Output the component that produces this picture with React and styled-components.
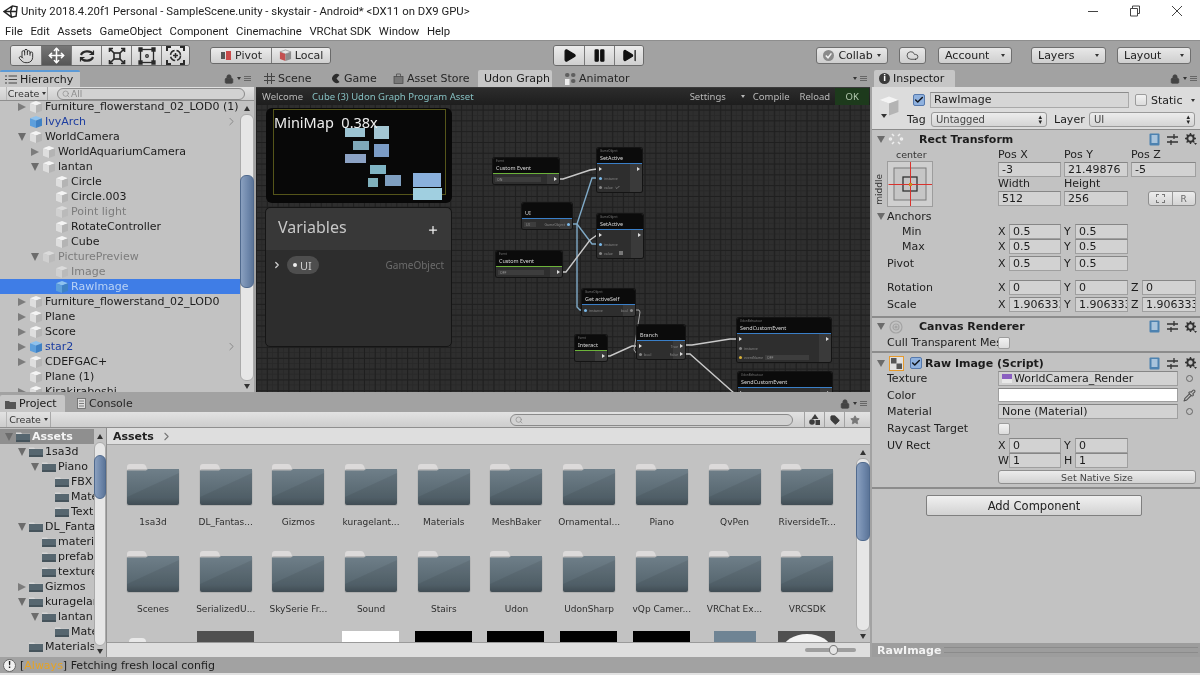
import React from "react";
import styled, { createGlobalStyle } from "styled-components";
import { Hand, Move, Lock, Search, Star, Tag, Cloud, Pipette, ChevronRight, Plus, Play, Pause, SkipForward, Check } from "lucide-react";

const GlobalStyle = createGlobalStyle`
  html, body { margin: 0; padding: 0; background: #a2a2a2; }
  * { box-sizing: border-box; }
`;

const Page = styled.div`
  width: 1200px;
  height: 675px;
  display: flex;
  flex-direction: column;
  overflow: hidden;
  font-family: "DejaVu Sans", sans-serif;
  font-size: 11px;
  color: #1c1c1c;
  background: #a2a2a2;
  filter: blur(0.4px);
`;

/* window chrome */
const TitleBar = styled.div`
  height: 22px;
  background: #fff;
  display: flex;
  align-items: center;
  padding-left: 3px;
  font-family: Roboto, sans-serif;
  font-size: 11.35px;
  color: #222;
`;
const TitleText = styled.span`
  margin-left: 3px;
  flex: 1;
`;
const WinButtons = styled.div`
  display: flex;
  align-items: center;
  gap: 30px;
  padding-right: 17px;
  color: #444;
`;
const MenuBar = styled.div`
  height: 18px;
  background: #fff;
  display: flex;
  align-items: center;
  gap: 7.6px;
  padding-left: 5px;
  font-family: Roboto, sans-serif;
  font-size: 11.35px;
  color: #222;
`;

/* toolbar */
const Toolbar = styled.div`
  height: 30px;
  display: flex;
  align-items: center;
  padding-left: 10px;
  border-top: 1px solid #8e8e8e;
  background: #a2a2a2;
`;
const BtnGroup = styled.div`
  display: flex;
  margin-left: ${(p) => p.$ml || 0}px;
  border: 1px solid #6a6a6a;
  border-radius: 3px;
  overflow: hidden;
  height: ${(p) => p.$h || 17}px;
`;
const ToolBtn = styled.div`
  width: ${(p) => p.$w}px;
  display: flex;
  align-items: center;
  justify-content: center;
  gap: 3px;
  color: ${(p) => (p.$on ? "#fff" : "#2a2a2a")};
  background: ${(p) => (p.$on ? "linear-gradient(#767676,#565656)" : "linear-gradient(#ececec,#cfcfcf)")};
  border-left: 1px solid #7a7a7a;
  font-size: 11px;
  &:first-child { border-left: 0; }
`;
const DropBtn = styled.div`
  width: ${(p) => p.$w}px;
  height: 17px;
  margin-left: ${(p) => p.$ml}px;
  padding: 0 6px;
  display: flex;
  align-items: center;
  justify-content: space-between;
  border: 1px solid #6f6f6f;
  border-radius: 3px;
  background: linear-gradient(#e8e8e8, #cecece);
  font-size: 11px;
  color: #222;
`;
const Caret = styled.span`
  width: 0;
  height: 0;
  border-left: 2.5px solid transparent;
  border-right: 2.5px solid transparent;
  border-top: 3px solid #333;
`;

/* layout */
const Workspace = styled.div`
  height: 587px;
  display: flex;
`;
const LeftArea = styled.div`
  width: 870px;
  display: flex;
  flex-direction: column;
  gap: 3px;
`;
const TopRow = styled.div`
  height: 322px;
  display: flex;
  gap: 2px;
`;
const Panel = styled.div`
  width: ${(p) => p.$w}px;
  height: ${(p) => (p.$h ? `${p.$h}px` : "auto")};
  display: flex;
  flex-direction: column;
  overflow: hidden;
`;
const TabBar = styled.div`
  height: 17px;
  flex: none;
  display: flex;
  align-items: stretch;
  padding-left: ${(p) => p.$pl || 0}px;
  background: #a2a2a2;
`;
const TabItem = styled.div`
  width: ${(p) => p.$w}px;
  display: flex;
  align-items: center;
  gap: 3px;
  padding-left: ${(p) => p.$pl || 5}px;
  font-size: 11px;
  color: ${(p) => (p.$on ? "#1a1a1a" : "#262626")};
  background: ${(p) => (p.$on ? "#c6c6c6" : "transparent")};
  border-top: ${(p) => (p.$focus ? "2px solid #5c9ad6" : "0")};
  border-radius: 2px 2px 0 0;
`;
const TabTools = styled.div`
  margin-left: auto;
  display: flex;
  align-items: center;
  gap: 3px;
  padding-right: 3px;
  color: #444;
`;
const MenuGlyph = styled.span`
  width: 7px;
  height: 5px;
  border-top: 1px solid #666;
  border-bottom: 1px solid #666;
  position: relative;
  &::after {
    content: "";
    position: absolute;
    left: 0;
    right: 0;
    top: 1px;
    height: 1px;
    background: #666;
  }
`;
const InfoCircle = styled.span`
  width: 11px;
  height: 11px;
  display: flex;
  align-items: center;
  justify-content: center;
  border-radius: 50%;
  background: #3a3a3a;
  color: #fff;
  font-size: 8px;
  font-weight: 700;
`;

/* hierarchy */
const PanelBar = styled.div`
  height: ${(p) => p.$h || 14}px;
  flex: none;
  display: flex;
  align-items: center;
  background: linear-gradient(#e2e2e2, #cdcdcd);
  border-bottom: 1px solid #8f8f8f;
`;
const CreateBtn = styled.div`
  width: ${(p) => p.$w}px;
  height: 100%;
  margin-left: ${(p) => p.$ml}px;
  display: flex;
  align-items: center;
  justify-content: center;
  gap: 3px;
  border-right: 1px solid #a8a8a8;
  border-left: 1px solid #b8b8b8;
  font-size: 9.5px;
  color: #333;
`;
const SearchField = styled.div`
  width: ${(p) => p.$w}px;
  height: 12px;
  margin-left: ${(p) => p.$ml}px;
  display: flex;
  align-items: center;
  padding-left: 4px;
  gap: 1px;
  border: 1px solid #8a8a8a;
  border-radius: 7px;
  background: #d2d2d2;
  font-size: 9px;
  color: #8d8d8d;
`;
const ListArea = styled.div`
  flex: 1;
  min-height: 0;
  display: flex;
  background: #c2c2c2;
`;
const TreeList = styled.div`
  flex: 1;
  min-width: 0;
  overflow: hidden;
  margin-top: ${(p) => p.$mt || 0}px;
`;
const Row = styled.div`
  height: 15px;
  display: flex;
  align-items: center;
  padding-left: ${(p) => 29 + p.$depth * 13}px;
  white-space: nowrap;
  font-size: 11px;
  font-weight: ${(p) => (p.$head ? 700 : 400)};
  background: ${(p) => (p.$sel ? "#3f7de6" : p.$head ? "#8f8f8f" : "transparent")};
  color: ${(p) => (p.$head ? "#f4f4f4" : p.$sel ? "#b8d2f5" : p.$dim ? "#7c7c7c" : p.$prefab ? "#1c3da0" : "#1c1c1c")};
`;
const ArrowSlot = styled.span`
  width: 0;
  position: relative;
  &::before {
    content: "";
    display: ${(p) => (p.$dir ? "block" : "none")};
    position: absolute;
    left: -11px;
    top: -4px;
    width: 0;
    height: 0;
    ${(p) =>
      p.$dir === "down"
        ? "border-left:4px solid transparent;border-right:4px solid transparent;border-top:8px solid #6c6c6c;"
        : "border-top:4px solid transparent;border-bottom:4px solid transparent;border-left:8px solid #7c7c7c;"}
  }
`;
const RowName = styled.span`
  margin-left: 2px;
`;
const RowChevron = styled.span`
  margin-left: auto;
  padding-right: 2px;
  display: flex;
  color: #777;
`;

/* scrollbars */
const Scrollbar = styled.div`
  width: ${(p) => p.$w || 13}px;
  flex: none;
  display: flex;
  flex-direction: column;
  align-items: center;
  padding: ${(p) => p.$pad || 0}px 0 3px;
`;
const ScrollTrack = styled.div`
  flex: 1;
  width: 100%;
  min-height: 0;
  margin: 3px 0;
  padding-top: ${(p) => p.$top}px;
  border-radius: 6px;
  background: #e6e6e6;
  border: 1px solid #aaa;
`;
const ScrollThumb = styled.div`
  height: ${(p) => p.$h}px;
  margin: 0 -1px;
  border-radius: 6px;
  border: 1px solid #506a8e;
  background: linear-gradient(90deg, #8aa0bf, #6d86aa 60%, #5c7598);
`;
const Tri = styled.span`
  flex: none;
  width: 0;
  height: 0;
  border-left: 3px solid transparent;
  border-right: 3px solid transparent;
  ${(p) => (p.$up ? "border-bottom: 5px solid #333;" : "border-top: 5px solid #333;")}
`;

/* udon graph */
const GraphView = styled.div`
  flex: 1;
  min-height: 0;
  display: flex;
  flex-direction: column;
  border-top: 1px solid #3a3a3a;
  background-color: #2e2e2e;
  background-image:
    linear-gradient(#1f1f1f 1px, transparent 1px),
    linear-gradient(90deg, #1f1f1f 1px, transparent 1px),
    linear-gradient(#282828 1px, transparent 1px),
    linear-gradient(90deg, #282828 1px, transparent 1px);
  background-size: 10.8px 10.8px, 10.8px 10.8px, 5.4px 5.4px, 5.4px 5.4px;
`;
const GraphBar = styled.div`
  height: 17px;
  flex: none;
  display: flex;
  align-items: stretch;
  white-space: nowrap;
  background: linear-gradient(#2c2c2c, #1e1e1e);
  font-family: "Noto Sans", sans-serif;
  font-size: 9.5px;
  color: #b8b8b8;
  padding-left: 6px;
`;
const GraphCrumb = styled.span`
  flex: none;
  display: flex;
  align-items: center;
  margin-left: ${(p) => p.$ml || 0}px;
  width: ${(p) => (p.$w ? `${p.$w}px` : "auto")};
  color: ${(p) => p.$c || "#b8b8b8"};
  background: ${(p) => p.$bg || "transparent"};
  justify-content: ${(p) => (p.$center ? "center" : "flex-start")};
`;
const GraphCaret = styled(Caret)`
  border-top-color: #b8b8b8;
`;
const GraphCanvas = styled.div`
  position: relative;
  flex: 1;
  min-height: 0;
  overflow: hidden;
`;
const WireLayer = styled.svg`
  position: absolute;
  left: 0;
  top: 0;
  z-index: 2;
`;
const MiniMap = styled.div`
  position: absolute;
  left: 10px;
  top: 3px;
  width: 186px;
  height: 95px;
  border-radius: 6px;
  background: #080808;
  z-index: 3;
`;
const MiniFrame = styled.div`
  position: absolute;
  left: 7px;
  top: 1px;
  width: 173px;
  height: 86px;
  border: 1px solid #55551a;
`;
const MiniLabel = styled.div`
  position: absolute;
  left: 8px;
  top: 4px;
  font-family: "Noto Sans", sans-serif;
  font-size: 14.5px;
  color: #eee;
  white-space: pre;
  z-index: 1;
`;
const MiniNode = styled.div`
  position: absolute;
  left: ${(p) => p.$x - 266}px;
  top: ${(p) => p.$y - 108}px;
  width: ${(p) => p.$w}px;
  height: ${(p) => p.$h}px;
  background: ${(p) => p.$c};
`;
const Variables = styled.div`
  position: absolute;
  left: 9px;
  top: 102px;
  width: 187px;
  height: 140px;
  border-radius: 5px;
  border: 1px solid #151515;
  background: #2d2d2d;
  z-index: 3;
  font-family: "Noto Sans", sans-serif;
`;
const VarHead = styled.div`
  height: 42px;
  display: flex;
  align-items: center;
  justify-content: space-between;
  padding: 0 12px 4px 12px;
  background: #383838;
  border-radius: 5px 5px 0 0;
  font-size: 16px;
  color: #c8c8c8;
  svg { color: #f0f0f0; margin-top: 6px; }
`;
const VarRow = styled.div`
  display: flex;
  align-items: center;
  padding: 6px 7px 0 6px;
  color: #cfcfcf;
`;
const VarPill = styled.div`
  width: 32px;
  height: 18px;
  margin-left: 5px;
  display: flex;
  align-items: center;
  gap: 3px;
  padding-left: 6px;
  border-radius: 9px;
  background: #4e4e4e;
  font-size: 11px;
`;
const VarDot = styled.span`
  width: 4px;
  height: 4px;
  border-radius: 50%;
  background: #eee;
`;
const VarType = styled.span`
  margin-left: auto;
  font-size: 10px;
  color: #6c6c6c;
`;

const NodeBox = styled.div`
  position: absolute;
  left: ${(p) => p.$x - 256}px;
  top: ${(p) => p.$y - 105}px;
  width: ${(p) => p.$w}px;
  height: ${(p) => p.$h}px;
  border-radius: 2px;
  overflow: hidden;
  background: linear-gradient(90deg, #2e2e2e calc(100% - 12px), #3a3a3a 0);
  box-shadow: 0 0 0 1px #141414;
  font-family: "Noto Sans", sans-serif;
  color: #c8c8c8;
  z-index: 3;
`;
const NodeHead = styled.div`
  height: 16px;
  background: #0b0b0b;
  padding: 1px 2px 0 3px;
  border-bottom: 1.5px solid ${(p) => p.$bar};
  font-size: 5.4px;
  line-height: 8px;
  color: #ddd;
  white-space: nowrap;
`;
const NodeSub = styled.div`
  font-size: 3px;
  line-height: 5px;
  height: 5px;
  color: #777;
`;
const NodeBody = styled.div`
  display: flex;
  flex-direction: column;
  padding: 2px 0 0 2px;
  gap: ${(p) => p.$gap || 2}px;
  font-size: 3.5px;
  color: #888;
`;
const NodeLine = styled.div`
  height: 6px;
  display: flex;
  align-items: center;
  gap: 2px;
  padding-right: 2px;
  justify-content: ${(p) => p.$justify || "space-between"};
`;
const NodeField = styled.span`
  width: ${(p) => p.$w}px;
  height: 5px;
  padding-left: 2px;
  line-height: 5px;
  background: #3d3d3d;
  color: #999;
`;
const PortDot = styled.span`
  width: 3px;
  height: 3px;
  border-radius: 50%;
  background: ${(p) => p.$c || "#888"};
`;
const FlowTri = styled.span`
  width: 0;
  height: 0;
  border-top: 2px solid transparent;
  border-bottom: 2px solid transparent;
  border-left: 3px solid #ddd;
`;
const NodeSide = styled.span`
  display: flex;
  align-items: center;
  gap: 2px;
`;
const NodeCheck = styled.span`
  width: 4px;
  height: 4px;
  margin-left: 4px;
  background: #777;
`;

/* inspector */
const InspectorPane = styled.div`
  width: 328px;
  margin-left: 2px;
  display: flex;
  flex-direction: column;
  background: #a2a2a2;
`;
const InspBody = styled.div`
  flex: 1;
  min-height: 0;
  background: #c2c2c2;
`;
const InspHead = styled.div`
  height: 43px;
  display: flex;
  gap: 13px;
  padding: 5px 0 0 6px;
  background: #dcdcdc;
  border-bottom: 1px solid #8b8b8b;
`;
const HeadLines = styled.div`
  display: flex;
  flex-direction: column;
  gap: 4px;
`;
const HeadLine = styled.div`
  display: flex;
  align-items: center;
`;
const HeadCube = styled.div`
  position: relative;
  padding-top: 3px;
`;
const CubeCaret = styled.span`
  position: absolute;
  left: 3px;
  top: 22px;
  width: 0;
  height: 0;
  border-left: 3.5px solid transparent;
  border-right: 3.5px solid transparent;
  border-top: 4px solid #333;
`;
const CheckBox = styled.span`
  width: 12px;
  height: 12px;
  flex: none;
  margin-left: ${(p) => p.$ml || 0}px;
  display: flex;
  align-items: center;
  justify-content: center;
  border: 1px solid ${(p) => (p.$on ? "#5679ad" : "#9c9c9c")};
  border-radius: 2px;
  background: ${(p) => (p.$on ? "#8fb1de" : "linear-gradient(#f2f2f2,#dcdcdc)")};
  color: #10151d;
`;
const NameField = styled.div`
  width: ${(p) => p.$w}px;
  height: 16px;
  margin-left: 5px;
  padding-left: 3px;
  line-height: 14px;
  border: 1px solid #a9a9a9;
  border-top-color: #8c8c8c;
  background: #d6d6d6;
`;
const StaticLabel = styled.span`
  margin-left: 4px;
  display: flex;
  align-items: center;
  gap: 9px;
`;
const HeadLabel = styled.span`
  width: ${(p) => p.$w}px;
  margin-left: ${(p) => p.$ml || 0}px;
`;
const Popup = styled.div`
  width: ${(p) => p.$w}px;
  height: 15px;
  padding: 0 4px;
  display: flex;
  align-items: center;
  justify-content: space-between;
  border: 1px solid #9a9a9a;
  border-radius: 3px;
  background: linear-gradient(#ececec, #d5d5d5);
  font-size: 10px;
  color: #444;
`;
const UpDown = styled.span`
  font-size: 7px;
  line-height: 5px;
  color: #222;
  white-space: pre;
`;

const Section = styled.div`
  height: ${(p) => p.$h}px;
  border-bottom: 2px solid #8c8c8c;
`;
const SectionHead = styled.div`
  height: ${(p) => p.$h || 18}px;
  display: flex;
  align-items: center;
  padding: ${(p) => p.$pt || 0}px 0 0 5px;
  font-weight: 700;
  font-size: 11px;
`;
const SectionName = styled.span`
  margin-left: ${(p) => p.$ml}px;
`;
const SecArrow = styled.span`
  width: 0;
  height: 0;
  border-left: 4px solid transparent;
  border-right: 4px solid transparent;
  border-top: 7px solid #6b6b6b;
`;
const SecIcon = styled.span`
  width: 18px;
  height: 16px;
  margin: 0 5px 0 2px;
  display: flex;
  align-items: center;
  justify-content: center;
`;
const SecTools = styled.span`
  margin-left: auto;
  padding-right: 3px;
  display: flex;
  align-items: center;
  gap: 7px;
`;
const RectGrid = styled.div`
  display: grid;
  grid-template-columns: 126px 198px;
  height: 59px;
`;
const AnchorCol = styled.div`
  display: flex;
  flex-direction: column;
  padding-left: 15px;
  font-size: 9.5px;
  color: #333;
`;
const AnchorTitle = styled.div`
  height: 13px;
  padding-left: 9px;
  line-height: 13px;
`;
const AnchorFrame = styled.div`
  position: relative;
  width: 46px;
  height: 46px;
  border: 1px solid #9d9d9d;
  background: #cfcfcf;
`;
const AnchorSide = styled.span`
  position: absolute;
  left: -14px;
  top: 12px;
  writing-mode: vertical-rl;
  transform: rotate(180deg);
  font-size: 9px;
  color: #333;
`;
const TripleGrid = styled.div`
  display: grid;
  grid-template-columns: 63px 64px 65px;
  column-gap: 3px;
  grid-auto-rows: 14.5px;
  align-items: center;
`;
const MiniLabelText = styled.span`
  font-size: 11px;
  line-height: 14px;
  color: #222;
`;
const ValueField = styled.div`
  height: ${(p) => p.$h || 15}px;
  width: ${(p) => (p.$w ? `${p.$w}px` : "100%")};
  min-width: 0;
  flex: ${(p) => (p.$w ? "none" : 1)};
  padding-left: 3px;
  line-height: 13px;
  overflow: hidden;
  white-space: nowrap;
  border: 1px solid #9f9f9f;
  border-top-color: #868686;
  background: ${(p) => p.$bg || "#d2d2d2"};
  font-size: 11px;
`;
const BlueprintBtns = styled.div`
  display: flex;
  width: 48px;
  height: 15px;
  margin-left: 17px;
  border: 1px solid #8e8e8e;
  border-radius: 3px;
  overflow: hidden;
  background: linear-gradient(#ececec, #d4d4d4);
  color: #666;
  font-size: 9px;
`;
const BlueprintCell = styled.span`
  flex: 1;
  display: flex;
  align-items: center;
  justify-content: center;
  border-left: ${(p) => (p.$line ? "1px solid #9a9a9a" : "0")};
`;
const DashSquare = styled.span`
  width: 9px;
  height: 9px;
  border: 1px dashed #777;
`;
const PropRow = styled.div`
  height: ${(p) => p.$h || 15}px;
  margin-top: ${(p) => p.$mt || 0}px;
  display: flex;
  align-items: center;
  padding-left: ${(p) => p.$pl || 15}px;
  font-size: 11px;
  white-space: nowrap;
`;
const PropName = styled.span`
  width: ${(p) => p.$w || 111}px;
  flex: none;
  overflow: hidden;
  padding-left: ${(p) => p.$indent || 0}px;
  color: #222;
`;
const AxisCell = styled.span`
  width: ${(p) => p.$w}px;
  margin-right: 3px;
  flex: none;
  display: flex;
  align-items: center;
`;
const AxisLetter = styled.span`
  width: 11px;
  flex: none;
`;
const NativeBtn = styled.div`
  width: 198px;
  height: 14px;
  display: flex;
  align-items: center;
  justify-content: center;
  border: 1px solid #8f8f8f;
  border-radius: 3px;
  background: linear-gradient(#ececec, #d2d2d2);
  font-size: 9.5px;
  color: #444;
`;
const AddRow = styled.div`
  padding: 6px 0 0 54px;
`;
const AddBtn = styled.div`
  width: 216px;
  height: 21px;
  display: flex;
  align-items: center;
  justify-content: center;
  border: 1px solid #7f7f7f;
  border-radius: 2px;
  background: linear-gradient(#f0f0f0, #d2d2d2);
  font-size: 11.5px;
  color: #222;
`;
const ObjectDot = styled.span`
  width: 7px;
  height: 7px;
  margin-left: 8px;
  border: 1.5px solid #666;
  border-radius: 50%;
`;
const PipetteSlot = styled.span`
  display: flex;
  margin-left: 5px;
  color: #555;
`;
const TexSwatch = styled.span`
  width: 10px;
  height: 9px;
  display: inline-block;
  margin-right: 2px;
  vertical-align: -1px;
  background: linear-gradient(#8a5fc0 50%, #e8e8e8 50%);
`;
const PreviewBar = styled.div`
  height: 14px;
  display: flex;
  align-items: center;
  gap: 3px;
  padding-left: 5px;
  background: #9d9d9d;
  font-weight: 700;
  color: #f2f2f2;
`;
const PreviewRule = styled.span`
  flex: 1;
  height: 6px;
  margin-right: 2px;
  border-top: 1px solid #8b8b8b;
  border-bottom: 1px solid #8b8b8b;
`;

/* project */
const ProjectBody = styled.div`
  flex: 1;
  min-height: 0;
  display: flex;
`;
const ProjectTree = styled.div`
  width: 107px;
  flex: none;
  display: flex;
  background: #c2c2c2;
  border-right: 1px solid #8f8f8f;
`;
const ProjectMain = styled.div`
  flex: 1;
  min-width: 0;
  display: flex;
  flex-direction: column;
`;
const Breadcrumb = styled.div`
  height: 17px;
  flex: none;
  display: flex;
  align-items: center;
  gap: 6px;
  padding-left: 6px;
  background: #dedede;
  border-bottom: 1px solid #a0a0a0;
  font-weight: 700;
  color: #222;
`;
const GridWrap = styled.div`
  flex: 1;
  min-height: 0;
  display: flex;
  background: #c2c2c2;
`;
const AssetGrid = styled.div`
  flex: 1;
  min-width: 0;
  overflow: hidden;
  display: grid;
  grid-template-columns: repeat(10, 72.7px);
  grid-auto-rows: 87px;
  padding: 18px 0 0 19px;
`;
const Asset = styled.div`
  width: 72.7px;
  display: flex;
  flex-direction: column;
  align-items: flex-start;
`;
const AssetLabel = styled.div`
  width: 70px;
  margin-top: 11px;
  margin-left: -8px;
  text-align: center;
  font-size: 9px;
  color: #2e2e2e;
  white-space: nowrap;
`;
const Thumb = styled.div`
  width: ${(p) => p.$w}px;
  height: ${(p) => p.$h || 30}px;
  margin-left: ${(p) => p.$ml}px;
  margin-top: ${(p) => p.$mt ?? -6}px;
  background: ${(p) => p.$c};
  border-radius: ${(p) => (p.$tab ? "4px 4px 0 0" : 0)};
  overflow: hidden;
`;
const ThumbCircle = styled.div`
  width: 48px;
  height: 30px;
  margin: 3px auto 0;
  border-radius: 50%;
  background: #f2f2f2;
`;
const Footer = styled.div`
  height: 15px;
  flex: none;
  display: flex;
  align-items: center;
  justify-content: flex-end;
  padding-right: 14px;
  background: #dedede;
  border-top: 1px solid #9a9a9a;
`;
const SliderTrack = styled.div`
  position: relative;
  width: 51px;
  height: 4px;
  border-radius: 2px;
  background: #9e9e9e;
`;
const SliderKnob = styled.span`
  position: absolute;
  left: 24px;
  top: -3px;
  width: 9px;
  height: 10px;
  border-radius: 50%;
  border: 1px solid #777;
  background: #e4e4e4;
`;
const FilterGroup = styled.div`
  display: flex;
  height: 100%;
  margin-left: 11px;
`;
const FilterBtn = styled.span`
  width: 20px;
  height: 100%;
  display: flex;
  align-items: center;
  justify-content: center;
  border-left: 1px solid #a2a2a2;
  color: #3c3c3c;
`;
const StatusBar = styled.div`
  height: 18px;
  flex: none;
  display: flex;
  align-items: center;
  gap: 4px;
  padding-left: 3px;
  border-bottom: 2px solid #e2e2e2;
  background: #a2a2a2;
  font-size: 11px;
  color: #1d1d1d;
`;
const InfoMark = styled.span`
  width: 13px;
  height: 13px;
  display: flex;
  align-items: center;
  justify-content: center;
  border-radius: 50%;
  background: #f0f0f0;
  border: 1px solid #666;
  font-size: 8px;
  font-weight: 700;
`;
const Always = styled.span`
  color: #e7a323;
`;

/* drawings */
const UnityLogo = () => (
  <svg width="15" height="15" viewBox="0 0 16 16" fill="none" stroke="#222" strokeWidth="1.5">
    <path d="M1 8 L10 2 L15 3 L14 13 L9 14 L1 8 Z M1 8 H8 M8 8 L10 2 M8 8 L9 14 M8 8 L14.5 8" />
  </svg>
);

const CubeIcon = ({ blue, faded, size = 14 }) => {
  const top = blue ? "#8ec2ee" : "#f4f4f4";
  const left = blue ? "#5d9fdc" : "#dedede";
  const right = blue ? "#3f81c4" : "#b4b4b4";
  return (
    <svg width={size} height={size} viewBox="0 0 14 14" style={{ flex: "none", opacity: faded ? 0.5 : 1 }}>
      <path d="M7 1 L13 3.2 L7 5.4 L1 3.2 Z" fill={top} />
      <path d="M1 3.2 L7 5.4 V13 L1 10.8 Z" fill={left} />
      <path d="M13 3.2 L7 5.4 V13 L13 10.8 Z" fill={right} />
    </svg>
  );
};

const SmallFolder = () => (
  <svg width="14" height="11" viewBox="0 0 14 11" style={{ flex: "none" }}>
    <path d="M0 1.5 h5 l1 1.2 h8 V3 H0 Z" fill="#d8d8d8" />
    <rect x="0" y="3" width="14" height="8" fill="#56666f" />
    <rect x="0" y="9" width="14" height="2" fill="#45535b" />
  </svg>
);

const BigFolder = ({ id }) => (
  <svg width="54" height="43" viewBox="0 0 54 43" style={{ display: "block" }}>
    <defs>
      <linearGradient id={`fb${id}`} x1="0" y1="0" x2="0" y2="1">
        <stop offset="0" stopColor="#6f7f89" />
        <stop offset="0.8" stopColor="#56666f" />
        <stop offset="1" stopColor="#46535b" />
      </linearGradient>
    </defs>
    <path d="M1 4 Q1 1 4 1 H17 Q19 1 20 3 L21 6 H52 Q53 6 53 8 V10 H1 Z" fill="#dcdada" />
    <rect x="0.5" y="6" width="53" height="37" rx="2.5" fill="#9a9a9a" opacity="0.5" />
    <path d="M1 7.5 H20 L22 6 H53 V40 Q53 42 51 42 H3 Q1 42 1 40 Z" fill={`url(#fb${id})`} />
    <path d="M1 34 L53 10 V40 Q53 42 51 42 H3 Q1 42 1 40 Z" fill="#000" opacity="0.07" />
  </svg>
);

const ScaleIcon = () => (
  <svg width="18" height="18" viewBox="0 0 18 18" fill="none" stroke="currentColor" strokeWidth="1.6">
    <rect x="6" y="6" width="6" height="6" />
    <path d="M1.5 5 V1.5 H5 M1.5 1.5 L6 6 M13 1.5 H16.5 V5 M16.5 1.5 L12 6 M1.5 13 V16.5 H5 M1.5 16.5 L6 12 M13 16.5 H16.5 V13 M16.5 16.5 L12 12" />
  </svg>
);
const RotateIcon = () => (
  <svg width="18" height="18" viewBox="0 0 18 18" fill="none" stroke="currentColor" strokeWidth="2.2">
    <path d="M3 8 A6.5 5 0 0 1 15 7" />
    <path d="M15 10 A6.5 5 0 0 1 3 11" />
    <path d="M15.5 3.5 V7.5 H11.5 M2.5 14.5 V10.5 H6.5" strokeWidth="1.2" />
  </svg>
);
const RectIcon = () => (
  <svg width="18" height="18" viewBox="0 0 18 18" fill="none" stroke="currentColor" strokeWidth="1.3">
    <rect x="2.5" y="2.5" width="13" height="13" />
    <circle cx="9" cy="9" r="1.3" />
    <path d="M1 1 h3 v3 h-3 Z M14 1 h3 v3 h-3 Z M1 14 h3 v3 h-3 Z M14 14 h3 v3 h-3 Z" fill="currentColor" />
  </svg>
);
const TransformIcon = () => (
  <svg width="19" height="19" viewBox="0 0 19 19" fill="none" stroke="currentColor" strokeWidth="1.5">
    <circle cx="9.5" cy="9.5" r="5" strokeDasharray="6 2" />
    <path d="M9.5 7 V12 M7 9.5 H12" />
    <path d="M1 5 V1 H5 M14 1 H18 V5 M1 14 V18 H5 M14 18 H18 V14" strokeWidth="2" />
  </svg>
);
const PivotIcon = () => (
  <svg width="12" height="11" viewBox="0 0 12 11">
    <rect x="1" y="2" width="4" height="7" fill="#555" />
    <rect x="6" y="1" width="5" height="9" fill="#c94a4a" />
  </svg>
);
const LocalIcon = () => (
  <svg width="13" height="13" viewBox="0 0 14 14">
    <path d="M7 1 L13 3.2 L7 5.4 L1 3.2 Z" fill="#e8e8e8" stroke="#777" strokeWidth="0.6" />
    <path d="M1 3.2 L7 5.4 V13 L1 10.8 Z" fill="#c45050" />
    <path d="M13 3.2 L7 5.4 V13 L13 10.8 Z" fill="#8c8c8c" />
  </svg>
);
const CollabIcon = () => (
  <svg width="11" height="11" viewBox="0 0 11 11">
    <circle cx="5.5" cy="5.5" r="5.5" fill="#8a8a8a" />
    <path d="M2.8 5.5 L5 7.8 L8.4 3.4" fill="none" stroke="#f2f2f2" strokeWidth="1.5" />
  </svg>
);
const TypeFilterIcon = () => (
  <svg width="11" height="11" viewBox="0 0 11 11" fill="#3c3c3c">
    <path d="M6 0 L9.5 5 H2.5 Z" />
    <circle cx="3" cy="8" r="2.8" />
    <rect x="6.5" y="6" width="4.5" height="5" />
  </svg>
);
const SceneGlyph = () => (
  <svg width="11" height="11" viewBox="0 0 11 11" stroke="#444" strokeWidth="1">
    <path d="M3.5 0 V11 M7.5 0 V11 M0 3.5 H11 M0 7.5 H11" />
  </svg>
);
const GameGlyph = () => (
  <svg width="11" height="11" viewBox="0 0 11 11">
    <path d="M9.5 2 A4.5 4.5 0 1 0 9.5 9 L6.5 5.5 Z" fill="#2c2c2c" />
  </svg>
);
const StoreGlyph = () => (
  <svg width="11" height="11" viewBox="0 0 11 11" fill="#777" stroke="#444" strokeWidth="0.7">
    <rect x="1" y="3.5" width="9" height="7" />
    <path d="M3.5 3.5 V1 H7.5 V3.5" fill="none" />
  </svg>
);
const AnimatorGlyph = () => (
  <svg width="11" height="12" viewBox="0 0 11 12" fill="#5f5f5f">
    <rect x="0" y="0" width="4.5" height="4" rx="2" />
    <rect x="6" y="0" width="4.5" height="4" rx="2" />
    <rect x="6" y="6" width="4.5" height="4" rx="2" />
    <rect x="0" y="6" width="4.5" height="6" fill="#eee" />
  </svg>
);
const FolderTabGlyph = () => (
  <svg width="11" height="10" viewBox="0 0 11 10" fill="#555">
    <path d="M0 2 h4 l1 1 h6 v7 H0 Z" />
  </svg>
);
const ConsoleGlyph = () => (
  <svg width="9" height="11" viewBox="0 0 9 11" stroke="#666" fill="#ddd" strokeWidth="0.8">
    <rect x="0.5" y="0.5" width="8" height="10" />
    <path d="M2 3 H7 M2 5.5 H7 M2 8 H7" />
  </svg>
);
const TabListGlyph = () => (
  <svg width="12" height="9" viewBox="0 0 12 9" stroke="#444" strokeWidth="1">
    <path d="M0 1 H2 M3.5 1 H12 M0 4.5 H2 M3.5 4.5 H12 M0 8 H2 M3.5 8 H12" />
  </svg>
);
const HelpBook = () => (
  <svg width="11" height="13" viewBox="0 0 11 13">
    <rect x="0.5" y="0.5" width="10" height="12" rx="1" fill="#4d82b0" />
    <rect x="2.5" y="2" width="6" height="8" fill="#a9c4dc" />
  </svg>
);
const PresetIcon = () => (
  <svg width="11" height="11" viewBox="0 0 11 11" stroke="#333" strokeWidth="1.3">
    <path d="M0 3 H11 M0 8 H11 M7 0 V5 M4 6 V11" />
  </svg>
);
const GearIcon = () => (
  <svg width="12" height="12" viewBox="0 0 12 12">
    <circle cx="5.5" cy="5.5" r="3.2" fill="none" stroke="#333" strokeWidth="2" />
    <path d="M5.5 0 V2 M5.5 9 V11 M0 5.5 H2 M9 5.5 H11 M1.6 1.6 L3 3 M8 8 L9.4 9.4 M9.4 1.6 L8 3 M3 8 L1.6 9.4" stroke="#333" strokeWidth="1.4" />
    <path d="M9 10 l3 0 l-1.5 2 Z" fill="#333" />
  </svg>
);
const ComponentTools = () => (
  <SecTools>
    <HelpBook />
    <PresetIcon />
    <GearIcon />
  </SecTools>
);
const RectToolIcon = () => (
  <svg width="16" height="16" viewBox="0 0 16 16" fill="none" stroke="#eee" strokeWidth="1.6">
    <path d="M4 3 L6 5 M12 3 L10 5 M4 13 L6 11 M12 13 L10 11" />
    <circle cx="2.5" cy="8" r="1" />
    <circle cx="13.5" cy="8" r="1" />
  </svg>
);
const EyeIcon = () => (
  <svg width="16" height="14" viewBox="0 0 16 14" fill="none" stroke="#a4a4a4" strokeWidth="1.2">
    <circle cx="8" cy="7" r="6" />
    <circle cx="8" cy="7" r="3" />
    <circle cx="8" cy="7" r="1" fill="#a4a4a4" />
  </svg>
);
const RawImageIcon = () => (
  <svg width="15" height="15" viewBox="0 0 15 15">
    <rect x="0.5" y="0.5" width="14" height="14" fill="#e0e0e0" stroke="#e69a2c" />
    <rect x="2" y="2" width="5.5" height="5.5" fill="#555" />
    <rect x="7.5" y="7.5" width="5.5" height="5.5" fill="#555" />
  </svg>
);
const AnchorDrawing = () => (
  <svg width="44" height="44" viewBox="0 0 44 44">
    <rect x="6" y="6" width="32" height="32" fill="#c6c6c6" stroke="#7a7a7a" />
    <rect x="15" y="15" width="14" height="14" fill="none" stroke="#333" strokeWidth="1.3" />
    <path d="M0.5 22.5 H44 " stroke="#d9322d" />
    <path d="M22.5 0 V44" stroke="#d9322d" />
    <rect x="21" y="21" width="3" height="3" fill="#c98a1d" />
  </svg>
);

const Wires = () => (
  <WireLayer width="614" height="287" viewBox="256 105 614 287" fill="none">
    <g stroke="#7fa9c6" strokeWidth="1.4">
      <path d="M572 224 H577 L592 178 H597" />
      <path d="M577 224 L592 244 H597" />
      <path d="M577 224 V307 L580 310 H584" />
    </g>
    <g stroke="#c9c9c9" strokeWidth="1.4">
      <path d="M559 179 H563 L590 170 L597 169" />
      <path d="M562 272 H566 L590 240 L597 235" />
      <path d="M607 356 H610 L632 346 H638" />
      <path d="M685 345 H692 L730 339 H737" />
      <path d="M685 354 H690 L734 393" />
    </g>
    <path d="M635 310 H639 L640 312 L634 350 L637 354 H640" stroke="#a8a8a8" strokeWidth="1" />
  </WireLayer>
);

const hierarchyRows = [
  { name: "Furniture_flowerstand_02_LOD0 (1)", depth: 0, dir: "right" },
  { name: "IvyArch", depth: 0, prefab: true, more: true },
  { name: "WorldCamera", depth: 0, dir: "down" },
  { name: "WorldAquariumCamera", depth: 1, dir: "right" },
  { name: "lantan", depth: 1, dir: "down" },
  { name: "Circle", depth: 2 },
  { name: "Circle.003", depth: 2 },
  { name: "Point light", depth: 2, dim: true },
  { name: "RotateController", depth: 2 },
  { name: "Cube", depth: 2 },
  { name: "PicturePreview", depth: 1, dir: "down", dim: true },
  { name: "Image", depth: 2, dim: true },
  { name: "RawImage", depth: 2, sel: true },
  { name: "Furniture_flowerstand_02_LOD0", depth: 0, dir: "right" },
  { name: "Plane", depth: 0, dir: "right" },
  { name: "Score", depth: 0, dir: "right" },
  { name: "star2", depth: 0, dir: "right", prefab: true, more: true },
  { name: "CDEFGAC+", depth: 0, dir: "right" },
  { name: "Plane (1)", depth: 0 },
  { name: "Kirakiraboshi", depth: 0, dir: "right" },
];

const projectRows = [
  { name: "Assets", depth: -1, dir: "down", head: true },
  { name: "1sa3d", depth: 0, dir: "down" },
  { name: "Piano", depth: 1, dir: "down" },
  { name: "FBX", depth: 2 },
  { name: "Materials", depth: 2 },
  { name: "Textures", depth: 2 },
  { name: "DL_Fantasy", depth: 0, dir: "down" },
  { name: "materials", depth: 1 },
  { name: "prefab", depth: 1 },
  { name: "textures", depth: 1 },
  { name: "Gizmos", depth: 0, dir: "right" },
  { name: "kuragelantan", depth: 0, dir: "down" },
  { name: "lantan", depth: 1, dir: "down" },
  { name: "Materials", depth: 2 },
  { name: "Materials", depth: 0 },
];

const folders = [
  "1sa3d", "DL_Fantas...", "Gizmos", "kuragelant...", "Materials", "MeshBaker", "Ornamental...", "Piano", "QvPen", "RiversideTr...",
  "Scenes", "SerializedU...", "SkySerie Fr...", "Sound", "Stairs", "Udon", "UdonSharp", "vQp Camer...", "VRChat Ex...", "VRCSDK",
];

const thumbs = [
  { w: 17, ml: 3, c: "#e8e8e8", mt: 1, h: 24, tab: true },
  { w: 57, ml: -2, c: "#505050" },
  { w: 0, ml: 0, c: "transparent" },
  { w: 57, ml: -2, c: "#fff" },
  { w: 57, ml: -2, c: "#000" },
  { w: 57, ml: -2, c: "#000" },
  { w: 57, ml: -2, c: "#000" },
  { w: 57, ml: -2, c: "#000" },
  { w: 42, ml: 6, c: "#6f8494" },
  { w: 57, ml: -2, c: "#505050", circle: true },
];

const miniNodes = [
  { x: 345, y: 128, w: 20, h: 9, c: "#9cc3d2" },
  { x: 374, y: 126, w: 15, h: 13, c: "#a3c6d3" },
  { x: 353, y: 141, w: 16, h: 9, c: "#7fa8b8" },
  { x: 374, y: 144, w: 15, h: 13, c: "#7b9cc6" },
  { x: 345, y: 154, w: 21, h: 9, c: "#8ca2c4" },
  { x: 370, y: 165, w: 16, h: 9, c: "#7fb4c4" },
  { x: 368, y: 178, w: 10, h: 9, c: "#7fb0bc" },
  { x: 385, y: 175, w: 16, h: 11, c: "#7f9fc0" },
  { x: 413, y: 173, w: 28, h: 14, c: "#8ab0dc" },
  { x: 413, y: 188, w: 29, h: 12, c: "#a0cfe0" },
];

const TreeRow = ({ row }) => (
  <Row $depth={row.depth} $sel={row.sel} $dim={row.dim} $prefab={row.prefab} $head={row.head}>
    <ArrowSlot $dir={row.dir} />
    {row.tree ? <SmallFolder /> : <CubeIcon blue={row.prefab || row.sel} faded={row.dim} />}
    <RowName>{row.name}</RowName>
    {row.more && (
      <RowChevron>
        <ChevronRight size={13} strokeWidth={1.4} />
      </RowChevron>
    )}
  </Row>
);

const Node = ({ x, y, w, h, bar, sub, title, gap, children }) => (
  <NodeBox $x={x} $y={y} $w={w} $h={h}>
    <NodeHead $bar={bar}>
      <NodeSub>{sub}</NodeSub>
      {title}
    </NodeHead>
    <NodeBody $gap={gap}>{children}</NodeBody>
  </NodeBox>
);

const Axis = ({ letter, value, w }) => (
  <AxisCell $w={w}>
    <AxisLetter>{letter}</AxisLetter>
    <ValueField>{value}</ValueField>
  </AxisCell>
);

const GREEN = "#6cb33a";
const BLUE = "#3a7fc8";

export default function App() {
  return (
    <Page>
      <GlobalStyle />
      <TitleBar>
        <UnityLogo />
        <TitleText>Unity 2018.4.20f1 Personal - SampleScene.unity - skystair - Android* &lt;DX11 on DX9 GPU&gt;</TitleText>
        <WinButtons>
          <svg width="12" height="12" viewBox="0 0 12 12" stroke="#444"><path d="M1 6.5 H11" /></svg>
          <svg width="12" height="12" viewBox="0 0 12 12" fill="none" stroke="#444"><path d="M1.5 3.5 H8.5 V11 H1.5 Z M3.5 3.5 V1 H10.5 V8.5 H8.5" /></svg>
          <svg width="12" height="12" viewBox="0 0 12 12" stroke="#444"><path d="M1 1 L11 11 M11 1 L1 11" /></svg>
        </WinButtons>
      </TitleBar>
      <MenuBar>
        {["File", "Edit", "Assets", "GameObject", "Component", "Cinemachine", "VRChat SDK", "Window", "Help"].map((m) => (
          <span key={m}>{m}</span>
        ))}
      </MenuBar>

      <Toolbar>
        <BtnGroup $h={21}>
          <ToolBtn $w={30}><Hand size={16} strokeWidth={1.4} /></ToolBtn>
          <ToolBtn $w={30} $on><Move size={17} strokeWidth={2.2} /></ToolBtn>
          <ToolBtn $w={30}><RotateIcon /></ToolBtn>
          <ToolBtn $w={30}><ScaleIcon /></ToolBtn>
          <ToolBtn $w={30}><RectIcon /></ToolBtn>
          <ToolBtn $w={28}><TransformIcon /></ToolBtn>
        </BtnGroup>
        <BtnGroup $ml={20}>
          <ToolBtn $w={60}><PivotIcon />Pivot</ToolBtn>
          <ToolBtn $w={59}><LocalIcon />Local</ToolBtn>
        </BtnGroup>
        <BtnGroup $ml={222} $h={21}>
          <ToolBtn $w={30}><Play size={15} fill="#111" color="#111" /></ToolBtn>
          <ToolBtn $w={30}><Pause size={15} fill="#111" color="#111" /></ToolBtn>
          <ToolBtn $w={29}><SkipForward size={15} fill="#111" color="#111" /></ToolBtn>
        </BtnGroup>
        <DropBtn $w={72} $ml={172}>
          <CollabIcon />Collab<Caret />
        </DropBtn>
        <DropBtn $w={27} $ml={11}>
          <Cloud size={13} strokeWidth={1.3} />
        </DropBtn>
        <DropBtn $w={74} $ml={12}>Account<Caret /></DropBtn>
        <DropBtn $w={75} $ml={19}>Layers<Caret /></DropBtn>
        <DropBtn $w={74} $ml={11}>Layout<Caret /></DropBtn>
      </Toolbar>

      <Workspace>
        <LeftArea>
          <TopRow>
            <Panel $w={254}>
              <TabBar>
                <TabItem $w={80} $on $focus><TabListGlyph />Hierarchy</TabItem>
                <TabTools><Lock size={10} color="#444" fill="#444" /><Caret /><MenuGlyph /></TabTools>
              </TabBar>
              <PanelBar>
                <CreateBtn $w={42} $ml={6}>Create<Caret /></CreateBtn>
                <SearchField $w={188} $ml={9}><Search size={8} />All</SearchField>
              </PanelBar>
              <ListArea>
                <TreeList $mt={-2}>
                  {hierarchyRows.map((r, i) => <TreeRow key={i} row={r} />)}
                </TreeList>
                <Scrollbar $w={14} $pad={5}>
                  <Tri $up />
                  <ScrollTrack $top={60}><ScrollThumb $h={113} /></ScrollTrack>
                  <Tri />
                </Scrollbar>
              </ListArea>
            </Panel>

            <Panel $w={614}>
              <TabBar $pl={3}>
                <TabItem $w={66}><SceneGlyph />Scene</TabItem>
                <TabItem $w={63}><GameGlyph />Game</TabItem>
                <TabItem $w={90}><StoreGlyph />Asset Store</TabItem>
                <TabItem $w={74} $on $pl={6}>Udon Graph</TabItem>
                <TabItem $w={80} $pl={13}><AnimatorGlyph />Animator</TabItem>
                <TabTools><Caret /><MenuGlyph /></TabTools>
              </TabBar>
              <GraphView>
                <GraphBar>
                  <GraphCrumb>Welcome</GraphCrumb>
                  <GraphCrumb $ml={9} $c="#86c0c2">Cube (3) Udon Graph Program Asset</GraphCrumb>
                  <GraphCrumb $ml={216}>Settings</GraphCrumb>
                  <GraphCrumb $ml={15}><GraphCaret /></GraphCrumb>
                  <GraphCrumb $ml={8}>Compile</GraphCrumb>
                  <GraphCrumb $ml={10}>Reload</GraphCrumb>
                  <GraphCrumb $ml={5} $w={34} $center $bg="#1d3a1c" $c="#b4c8b0">OK</GraphCrumb>
                </GraphBar>
                <GraphCanvas>
                  <Wires />
                  <MiniMap>
                    <MiniFrame />
                    <MiniLabel>{"MiniMap  0.38x"}</MiniLabel>
                    {miniNodes.map((n, i) => (
                      <MiniNode key={i} $x={n.x} $y={n.y} $w={n.w} $h={n.h} $c={n.c} />
                    ))}
                  </MiniMap>
                  <Variables>
                    <VarHead>Variables<Plus size={12} strokeWidth={2.5} /></VarHead>
                    <VarRow>
                      <ChevronRight size={10} strokeWidth={3} />
                      <VarPill><VarDot />UI</VarPill>
                      <VarType>GameObject</VarType>
                    </VarRow>
                  </Variables>

                  <Node x={493} y={158} w={66} h={26} bar={GREEN} sub="Event" title="Custom Event">
                    <NodeLine><NodeField $w={46}>ON</NodeField><FlowTri /></NodeLine>
                  </Node>
                  <Node x={597} y={148} w={45} h={44} bar={BLUE} sub="GameObject" title="SetActive" gap={3}>
                    <NodeLine><FlowTri /><FlowTri /></NodeLine>
                    <NodeLine $justify="flex-start"><PortDot $c="#7ab8e8" />instance</NodeLine>
                    <NodeLine $justify="flex-start"><PortDot />value<Check size={5} color="#ddd" /></NodeLine>
                  </Node>
                  <Node x={522} y={203} w={50} h={26} bar={BLUE} title="UI" sub=" ">
                    <NodeLine><NodeField $w={12}>UI</NodeField><NodeSide>GameObject<PortDot $c="#7ab8e8" /></NodeSide></NodeLine>
                  </Node>
                  <Node x={597} y={214} w={46} h={44} bar={BLUE} sub="GameObject" title="SetActive" gap={3}>
                    <NodeLine><FlowTri /><FlowTri /></NodeLine>
                    <NodeLine $justify="flex-start"><PortDot $c="#7ab8e8" />instance</NodeLine>
                    <NodeLine $justify="flex-start"><PortDot />value<NodeCheck /></NodeLine>
                  </Node>
                  <Node x={496} y={251} w={66} h={26} bar={GREEN} sub="Event" title="Custom Event">
                    <NodeLine><NodeField $w={46}>OFF</NodeField><FlowTri /></NodeLine>
                  </Node>
                  <Node x={582} y={289} w={53} h={27} bar={BLUE} sub="GameObject" title="Get activeSelf">
                    <NodeLine><NodeSide><PortDot $c="#7ab8e8" />instance</NodeSide><NodeSide>bool<PortDot /></NodeSide></NodeLine>
                  </Node>
                  <Node x={575} y={335} w={32} h={26} bar={GREEN} sub="Event" title="Interact">
                    <NodeLine $justify="flex-end"><FlowTri /></NodeLine>
                  </Node>
                  <Node x={637} y={325} w={48} h={34} bar={BLUE} sub=" " title="Branch">
                    <NodeLine><FlowTri /><NodeSide>True<FlowTri /></NodeSide></NodeLine>
                    <NodeLine><NodeSide><PortDot />bool</NodeSide><NodeSide>False<FlowTri /></NodeSide></NodeLine>
                  </Node>
                  <Node x={737} y={318} w={94} h={44} bar={BLUE} sub="UdonBehaviour" title="SendCustomEvent" gap={3}>
                    <NodeLine><FlowTri /><FlowTri /></NodeLine>
                    <NodeLine $justify="flex-start"><PortDot />instance</NodeLine>
                    <NodeLine $justify="flex-start"><PortDot $c="#d8b13a" />eventName<NodeField $w={44}>OFF</NodeField></NodeLine>
                  </Node>
                  <Node x={738} y={372} w={94} h={44} bar={BLUE} sub="UdonBehaviour" title="SendCustomEvent">
                    <NodeLine><FlowTri /><FlowTri /></NodeLine>
                  </Node>
                </GraphCanvas>
              </GraphView>
            </Panel>
          </TopRow>

          <Panel $w={870} $h={262}>
            <TabBar>
              <TabItem $w={65} $on><FolderTabGlyph />Project</TabItem>
              <TabItem $w={70} $pl={12}><ConsoleGlyph />Console</TabItem>
              <TabTools><Lock size={10} color="#444" fill="#444" /><Caret /><MenuGlyph /></TabTools>
            </TabBar>
            <PanelBar $h={16}>
              <CreateBtn $w={45} $ml={6}>Create<Caret /></CreateBtn>
              <SearchField $w={283} $ml={459}><Search size={8} /></SearchField>
              <FilterGroup>
                <FilterBtn><TypeFilterIcon /></FilterBtn>
                <FilterBtn><Tag size={10} fill="#3c3c3c" /></FilterBtn>
                <FilterBtn><Star size={10} fill="#777" color="#777" /></FilterBtn>
              </FilterGroup>
            </PanelBar>
            <ProjectBody>
              <ProjectTree>
                <TreeList $mt={1}>
                  {projectRows.map((r, i) => <TreeRow key={i} row={{ ...r, tree: true }} />)}
                </TreeList>
                <Scrollbar $w={12} $pad={6}>
                  <Tri $up />
                  <ScrollTrack $top={12}><ScrollThumb $h={44} /></ScrollTrack>
                  <Tri />
                </Scrollbar>
              </ProjectTree>
              <ProjectMain>
                <Breadcrumb>Assets<ChevronRight size={13} color="#777" /></Breadcrumb>
                <GridWrap>
                  <AssetGrid>
                    {folders.map((f, i) => (
                      <Asset key={f}>
                        <BigFolder id={i} />
                        <AssetLabel>{f}</AssetLabel>
                      </Asset>
                    ))}
                    {thumbs.map((t, i) => (
                      <Asset key={i}>
                        <Thumb $w={t.w} $ml={t.ml} $c={t.c} $mt={t.mt} $h={t.h} $tab={t.tab}>{t.circle && <ThumbCircle />}</Thumb>
                      </Asset>
                    ))}
                  </AssetGrid>
                  <Scrollbar $w={14} $pad={5}>
                    <Tri $up />
                    <ScrollTrack $top={3}><ScrollThumb $h={79} /></ScrollTrack>
                    <Tri />
                  </Scrollbar>
                </GridWrap>
                <Footer><SliderTrack><SliderKnob /></SliderTrack></Footer>
              </ProjectMain>
            </ProjectBody>
          </Panel>
        </LeftArea>

        <InspectorPane>
          <TabBar $pl={2}>
            <TabItem $w={81} $on><InfoCircle>i</InfoCircle>Inspector</TabItem>
            <TabTools><Lock size={10} color="#444" fill="#444" /><Caret /><MenuGlyph /></TabTools>
          </TabBar>
          <InspHead>
            <HeadCube><CubeIcon size={22} /><CubeCaret /></HeadCube>
            <HeadLines>
              <HeadLine>
                <CheckBox $on><Check size={10} strokeWidth={3.5} /></CheckBox>
                <NameField $w={199}>RawImage</NameField>
                <CheckBox $ml={6} />
                <StaticLabel>Static<Caret /></StaticLabel>
              </HeadLine>
              <HeadLine>
                <HeadLabel $w={24} $ml={-6}>Tag</HeadLabel>
                <Popup $w={116}>Untagged<UpDown>{"▴\n▾"}</UpDown></Popup>
                <HeadLabel $w={35} $ml={7}>Layer</HeadLabel>
                <Popup $w={106}>UI<UpDown>{"▴\n▾"}</UpDown></Popup>
              </HeadLine>
            </HeadLines>
          </InspHead>
          <InspBody>
            <Section $h={188}>
              <SectionHead>
                <SecArrow />
                <SecIcon><RectToolIcon /></SecIcon>
                <SectionName $ml={9}>Rect Transform</SectionName>
                <ComponentTools />
              </SectionHead>
              <RectGrid>
                <AnchorCol>
                  <AnchorTitle>center</AnchorTitle>
                  <AnchorFrame>
                    <AnchorSide>middle</AnchorSide>
                    <AnchorDrawing />
                  </AnchorFrame>
                </AnchorCol>
                <TripleGrid>
                  <MiniLabelText>Pos X</MiniLabelText>
                  <MiniLabelText>Pos Y</MiniLabelText>
                  <MiniLabelText>Pos Z</MiniLabelText>
                  <ValueField>-3</ValueField>
                  <ValueField>21.49876</ValueField>
                  <ValueField>-5</ValueField>
                  <MiniLabelText>Width</MiniLabelText>
                  <MiniLabelText>Height</MiniLabelText>
                  <span />
                  <ValueField>512</ValueField>
                  <ValueField>256</ValueField>
                  <BlueprintBtns>
                    <BlueprintCell><DashSquare /></BlueprintCell>
                    <BlueprintCell $line>R</BlueprintCell>
                  </BlueprintBtns>
                </TripleGrid>
              </RectGrid>
              <PropRow $mt={2} $pl={5}><SecArrow /><PropName $indent={2}>Anchors</PropName></PropRow>
              <PropRow><PropName $indent={15}>Min</PropName><Axis letter="X" value="0.5" w={63} /><Axis letter="Y" value="0.5" w={64} /></PropRow>
              <PropRow><PropName $indent={15}>Max</PropName><Axis letter="X" value="0.5" w={63} /><Axis letter="Y" value="0.5" w={64} /></PropRow>
              <PropRow $mt={2}><PropName>Pivot</PropName><Axis letter="X" value="0.5" w={63} /><Axis letter="Y" value="0.5" w={64} /></PropRow>
              <PropRow $mt={9}><PropName>Rotation</PropName><Axis letter="X" value="0" w={63} /><Axis letter="Y" value="0" w={64} /><Axis letter="Z" value="0" w={65} /></PropRow>
              <PropRow $mt={2}><PropName>Scale</PropName><Axis letter="X" value="1.906333" w={63} /><Axis letter="Y" value="1.906333" w={64} /><Axis letter="Z" value="1.906333" w={65} /></PropRow>
            </Section>
            <Section $h={35}>
              <SectionHead $h={17}>
                <SecArrow />
                <SecIcon><EyeIcon /></SecIcon>
                <SectionName $ml={9}>Canvas Renderer</SectionName>
                <ComponentTools />
              </SectionHead>
              <PropRow><PropName>Cull Transparent Mesh</PropName><CheckBox /></PropRow>
            </Section>
            <Section $h={136}>
              <SectionHead $pt={2}>
                <SecArrow />
                <SecIcon><RawImageIcon /></SecIcon>
                <CheckBox $on><Check size={10} strokeWidth={3.5} /></CheckBox>
                <SectionName $ml={3}>Raw Image (Script)</SectionName>
                <ComponentTools />
              </SectionHead>
              <PropRow>
                <PropName>Texture</PropName>
                <ValueField $w={180}><TexSwatch />WorldCamera_Render</ValueField>
                <ObjectDot />
              </PropRow>
              <PropRow $mt={2} $h={14}>
                <PropName>Color</PropName>
                <ValueField $w={180} $h={14} $bg="#fff" />
                <PipetteSlot><Pipette size={13} /></PipetteSlot>
              </PropRow>
              <PropRow $mt={2}>
                <PropName>Material</PropName>
                <ValueField $w={180}>None (Material)</ValueField>
                <ObjectDot />
              </PropRow>
              <PropRow $mt={2}><PropName>Raycast Target</PropName><CheckBox /></PropRow>
              <PropRow $mt={2}><PropName>UV Rect</PropName><Axis letter="X" value="0" w={63} /><Axis letter="Y" value="0" w={64} /></PropRow>
              <PropRow><PropName /><Axis letter="W" value="1" w={63} /><Axis letter="H" value="1" w={64} /></PropRow>
              <PropRow $mt={2} $h={14}><PropName /><NativeBtn>Set Native Size</NativeBtn></PropRow>
            </Section>
            <AddRow><AddBtn>Add Component</AddBtn></AddRow>
          </InspBody>
          <PreviewBar>RawImage<PreviewRule /></PreviewBar>
        </InspectorPane>
      </Workspace>

      <StatusBar>
        <InfoMark>!</InfoMark>
        <span>[<Always>Always</Always>] Fetching fresh local config</span>
      </StatusBar>
    </Page>
  );
}
